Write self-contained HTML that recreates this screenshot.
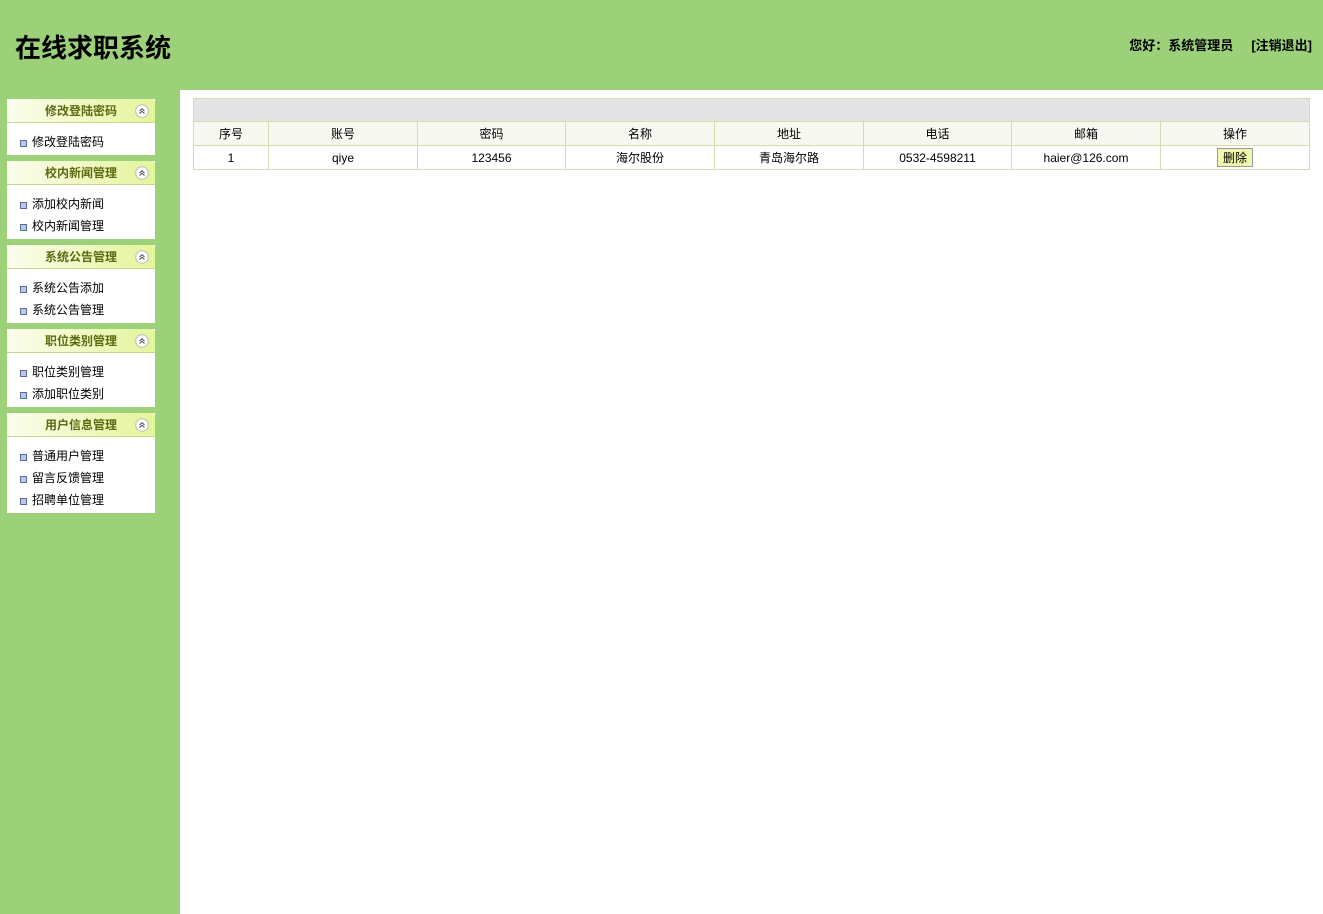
<!DOCTYPE html><html><head><meta charset="utf-8"><style>
*{margin:0;padding:0;box-sizing:border-box}
body{width:1323px;height:914px;background:#9cd17a;font-family:"Liberation Sans","Noto Sans CJK SC",sans-serif;font-size:12px;color:#000;position:relative;overflow:hidden;border-top-right-radius:6px}
.title{position:absolute;left:15px;top:28px;font-size:26px;font-weight:bold}
.hello{position:absolute;right:11px;top:35px;font-size:13px;font-weight:bold}
.main{position:absolute;left:180px;top:90px;right:0;bottom:0;background:#fff}
.panel{position:absolute;left:7px;width:148px;background:#fff}
.ph{height:24px;border-radius:4px 4px 0 0;background:linear-gradient(90deg,#fbfdee,#e3f59a);border-bottom:1px solid #c8d88a;text-align:center;line-height:24px;font-weight:bold;color:#5c6a10;font-size:12px;position:relative}
.ph svg{position:absolute;right:6px;top:5px}
.pb{padding-top:8px}
.it{height:22px;line-height:22px;padding-left:25px;position:relative}
.it:before{content:"";position:absolute;left:13px;top:9px;width:5px;height:5px;border:1px solid #5a6a9a;background:#b8c8e8}
table{position:absolute;left:193px;top:98px;width:1117px;border-collapse:collapse}
td{border:1px solid #d6dcb0;text-align:center;height:24px;font-size:12px}
tr.g td{background:#e4e4e4;height:23px}
tr.h td{background:#f7f8ef}
button{background:#f0f7ac;border:1px solid #999;font-size:12px;padding:0 5px;height:19px;font-family:inherit}
</style></head><body>
<div class="title">在线求职系统</div>
<div class="hello">您好：系统管理员 &nbsp;&nbsp;&nbsp;&nbsp;[注销退出]</div>
<div class="main"></div>
<svg width="0" height="0" style="position:absolute"><symbol id="ic" viewBox="0 0 14 14"><circle cx="7" cy="7" r="6.3" fill="#fff" stroke="#bbb"/><path d="M4.5 7 L7 4.8 L9.5 7 M4.5 9.5 L7 7.3 L9.5 9.5" fill="none" stroke="#444" stroke-width="1"/></symbol></svg>
<div class="panel" style="top:99px;height:56px"><div class="ph">修改登陆密码<svg width="14" height="14"><use href="#ic"/></svg></div><div class="pb"><div class="it">修改登陆密码</div></div></div>
<div class="panel" style="top:161px;height:78px"><div class="ph">校内新闻管理<svg width="14" height="14"><use href="#ic"/></svg></div><div class="pb"><div class="it">添加校内新闻</div><div class="it">校内新闻管理</div></div></div>
<div class="panel" style="top:245px;height:78px"><div class="ph">系统公告管理<svg width="14" height="14"><use href="#ic"/></svg></div><div class="pb"><div class="it">系统公告添加</div><div class="it">系统公告管理</div></div></div>
<div class="panel" style="top:329px;height:78px"><div class="ph">职位类别管理<svg width="14" height="14"><use href="#ic"/></svg></div><div class="pb"><div class="it">职位类别管理</div><div class="it">添加职位类别</div></div></div>
<div class="panel" style="top:413px;height:100px"><div class="ph">用户信息管理<svg width="14" height="14"><use href="#ic"/></svg></div><div class="pb"><div class="it">普通用户管理</div><div class="it">留言反馈管理</div><div class="it">招聘单位管理</div></div></div>
<table>
<tr class="g"><td colspan="8"></td></tr>
<tr class="h"><td style="width:75px">序号</td><td style="width:149px">账号</td><td style="width:148px">密码</td><td style="width:149px">名称</td><td style="width:149px">地址</td><td style="width:148px">电话</td><td style="width:149px">邮箱</td><td>操作</td></tr>
<tr><td>1</td><td>qiye</td><td>123456</td><td>海尔股份</td><td>青岛海尔路</td><td>0532-4598211</td><td>haier@126.com</td><td><button>删除</button></td></tr>
</table>
</body></html>
